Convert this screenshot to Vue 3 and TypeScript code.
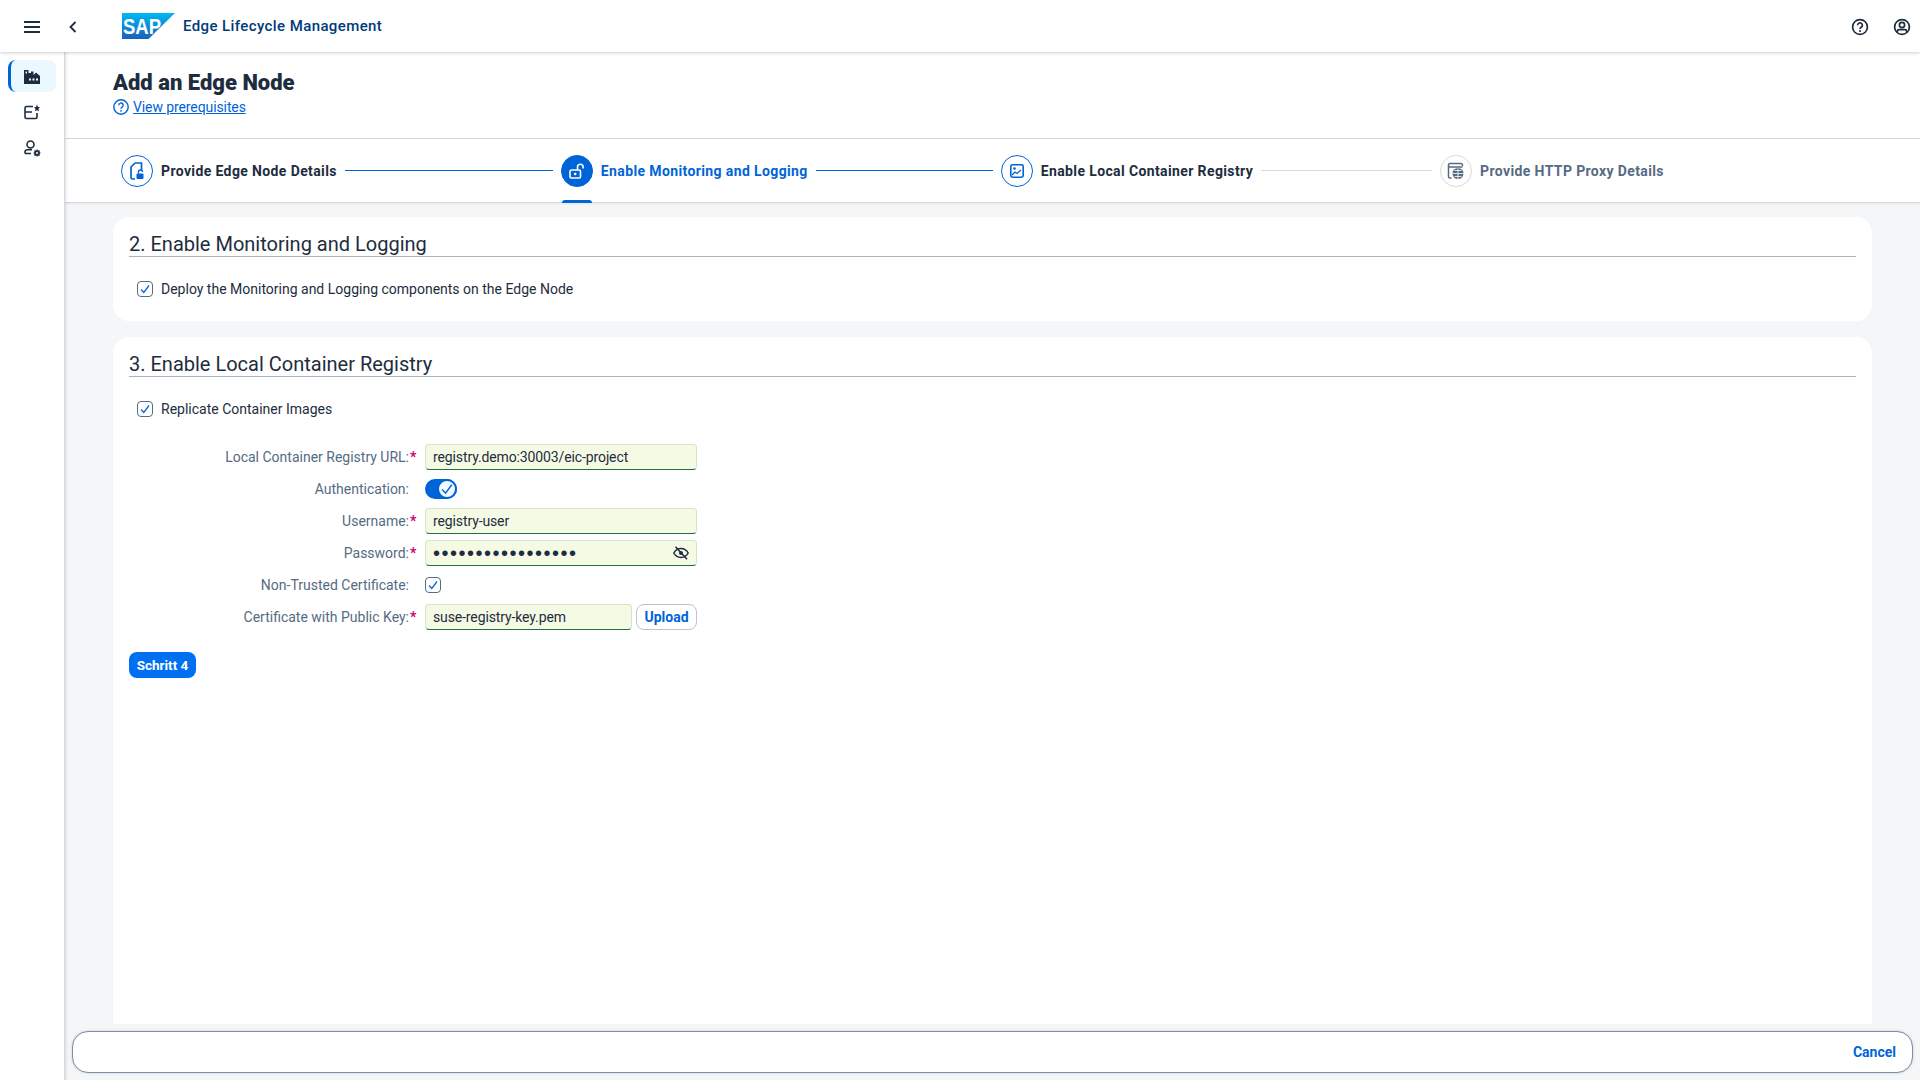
<script setup lang="ts">
interface Step {
  title: string
  state: 'done' | 'active' | 'next' | 'off'
  lineWidth: number
}

const steps: Step[] = [
  { title: 'Provide Edge Node Details', state: 'done', lineWidth: 208 },
  { title: 'Enable Monitoring and Logging', state: 'active', lineWidth: 177 },
  { title: 'Enable Local Container Registry', state: 'next', lineWidth: 171 },
  { title: 'Provide HTTP Proxy Details', state: 'off', lineWidth: 0 }
]
</script>

<template>
  <div class="app">
    <header class="shell">
      <svg class="burger" width="16" height="12" viewBox="0 0 16 12">
        <path d="M0 1h16M0 6h16M0 11h16" stroke="#1d2d3e" stroke-width="2" />
      </svg>
      <svg class="back" width="8" height="12" viewBox="0 0 8 12">
        <path d="M6.500 1L1.500 6l5 5" fill="none" stroke="#1d2d3e" stroke-width="1.800" />
      </svg>
      <svg class="logo" width="53" height="26" viewBox="0 0 53 26">
        <defs>
          <linearGradient id="sapBlue" x1="0" y1="0" x2="0" y2="1">
            <stop offset="0" stop-color="#00b8f1" />
            <stop offset="0.5" stop-color="#0a8ddb" />
            <stop offset="1" stop-color="#1e5fbb" />
          </linearGradient>
        </defs>
        <polygon points="0,0 53,0 26.500,26 0,26" fill="url(#sapBlue)" />
        <text x="1" y="21" class="logo-text" textLength="38" lengthAdjust="spacingAndGlyphs">SAP</text>
      </svg>
      <span class="app-title">Edge Lifecycle Management</span>
      <span class="shell-spacer"></span>
      <svg class="shell-icon" width="18" height="18" viewBox="0 0 18 18">
        <circle cx="9" cy="9" r="7.400" fill="none" stroke="#1d2d3e" stroke-width="1.700" />
        <path d="M6.600 7.200a2.400 2.400 0 1 1 3.600 2.100c-.8.500-1.200.9-1.200 1.700" fill="none" stroke="#1d2d3e" stroke-width="1.700" />
        <circle cx="9" cy="13" r="1.100" fill="#1d2d3e" />
      </svg>
      <svg class="shell-icon last" width="18" height="18" viewBox="0 0 18 18">
        <circle cx="9" cy="9" r="7.400" fill="none" stroke="#1d2d3e" stroke-width="1.700" />
        <circle cx="9" cy="7" r="2.600" fill="none" stroke="#1d2d3e" stroke-width="1.700" />
        <path d="M4.300 14v-.6c0-1 .8-1.800 1.800-1.800h5.800c1 0 1.800.8 1.800 1.800v.6" fill="none" stroke="#1d2d3e" stroke-width="1.700" />
      </svg>
    </header>

    <div class="body">
      <nav class="side">
        <a class="side-item selected">
          <svg class="factory" width="16" height="14" viewBox="0 0 16 14">
            <path d="M0 0h4.500v3h2.500v-1.500h2.500v3.500l2.500-2.500 4 3.500v8H0z" fill="#1d2d3e" />
            <path d="M5 8.500h2v2H5zM8.500 8.500h2v2h-2zM12 8.500h2v2h-2zM1.500 1.500h1.500v2H1.500z" fill="#ebf8ff" />
          </svg>
        </a>
        <a class="side-item">
          <svg width="16" height="16" viewBox="0 0 16 16">
            <path d="M9 2.500H2.500A1.500 1.500 0 0 0 1 4v9a1.500 1.500 0 0 0 1.500 1.500h9A1.500 1.500 0 0 0 13 13V9M1 8h7" fill="none" stroke="#1d2d3e" stroke-width="1.600" />
            <polygon points="13,0.500 14,3 16,3.300 14.500,5 15,7.300 13,6.200 11,7.300 11.500,5 10,3.300 12,3" fill="#1d2d3e" />
          </svg>
        </a>
        <a class="side-item">
          <svg width="17" height="17" viewBox="0 0 17 17">
            <circle cx="6.500" cy="4.500" r="3.500" fill="none" stroke="#1d2d3e" stroke-width="1.600" />
            <path d="M1 13.500v-1.500c0-1.500 1-2.200 2.500-2.200H8M1 13.500h6" fill="none" stroke="#1d2d3e" stroke-width="1.600" />
            <circle cx="13" cy="13" r="2" fill="none" stroke="#1d2d3e" stroke-width="1.700" />
            <path d="M13 9.500v7M9.500 13h7M10.500 10.500l5 5M15.500 10.500l-5 5" stroke="#1d2d3e" stroke-width="1.200" />
            <circle cx="13" cy="13" r="1" fill="#fff" />
          </svg>
        </a>
      </nav>

      <main class="page">
        <section class="page-head">
          <h1 class="page-title">Add an Edge Node</h1>
          <div class="prereq">
            <svg width="16" height="16" viewBox="0 0 16 16">
              <circle cx="8" cy="8" r="7.200" fill="none" stroke="#0064d9" stroke-width="1.400" />
              <path d="M5.800 6.300a2.200 2.200 0 1 1 3.300 1.900c-.7.400-1.100.8-1.100 1.500" fill="none" stroke="#0064d9" stroke-width="1.400" />
              <circle cx="8" cy="11.800" r=".9" fill="#0064d9" />
            </svg>
            <a class="link">View prerequisites</a>
          </div>
        </section>

        <div class="steps">
          <template v-for="(step, i) in steps" :key="step.title">
            <div class="step" :class="step.state">
              <span class="bubble">
                <svg v-if="i === 0" width="16" height="18" viewBox="0 0 16 18">
                  <path d="M6 1h6.500v7M6 1L2 5v10.500A1.500 1.500 0 0 0 3.500 17H6" fill="none" stroke="#0064d9" stroke-width="1.700" />
                  <rect x="7.500" y="11.500" width="7" height="5.500" rx="1" fill="#0064d9" />
                  <path d="M9.500 11.500v-1.500a2 2 0 0 1 4 0" fill="none" stroke="#0064d9" stroke-width="1.400" />
                </svg>
                <svg v-else-if="i === 1" width="16" height="16" viewBox="0 0 16 16">
                  <rect x="1" y="7" width="10.500" height="8" rx="1.500" fill="none" stroke="#fff" stroke-width="1.600" />
                  <circle cx="6.200" cy="11" r="1.300" fill="#fff" />
                  <path d="M8.500 7V4a2.800 2.800 0 0 1 5.600 0v1.500" fill="none" stroke="#fff" stroke-width="1.600" />
                </svg>
                <svg v-else-if="i === 2" width="14" height="14" viewBox="0 0 14 14">
                  <rect x=".8" y=".8" width="12.400" height="12.400" rx="1.600" fill="none" stroke="#0064d9" stroke-width="1.600" />
                  <circle cx="4.500" cy="4.500" r="1.300" fill="#0064d9" />
                  <path d="M2 11l3-3 2 1.500L11 6" fill="none" stroke="#0064d9" stroke-width="1.300" />
                </svg>
                <svg v-else width="18" height="18" viewBox="0 0 18 18">
                  <path d="M4.500 16H3a1.500 1.500 0 0 1-1.500-1.500V3A1.500 1.500 0 0 1 3 1.500h11A1.500 1.500 0 0 1 15.500 3v1M1.500 5h14" fill="none" stroke="#556b82" stroke-width="1.500" />
                  <circle cx="11" cy="11.500" r="5.500" fill="#556b82" />
                  <path d="M5.500 11.500h11M11 6v11M7.500 8.500h7M7.500 14.500h7" stroke="#fff" stroke-width=".8" />
                </svg>
              </span>
              <span class="step-title">{{ step.title }}</span>
              <span v-if="step.state === 'active'" class="step-mark"></span>
            </div>
            <span
              v-if="step.lineWidth"
              class="step-line"
              :class="{ muted: step.state === 'next' }"
              :style="{ width: step.lineWidth + 'px' }"
            ></span>
          </template>
        </div>

        <div class="content">
          <section class="card">
            <h2 class="card-title">2. Enable Monitoring and Logging</h2>
            <label class="check-row">
              <span class="check">
                <svg width="10" height="10" viewBox="0 0 10 10"><path d="M1 5.500L3.800 8.500 9 1.500" fill="none" stroke="#0064d9" stroke-width="1.300" /></svg>
              </span>
              Deploy the Monitoring and Logging components on the Edge Node
            </label>
          </section>

          <section class="card grow">
            <h2 class="card-title">3. Enable Local Container Registry</h2>
            <label class="check-row">
              <span class="check">
                <svg width="10" height="10" viewBox="0 0 10 10"><path d="M1 5.500L3.800 8.500 9 1.500" fill="none" stroke="#0064d9" stroke-width="1.300" /></svg>
              </span>
              Replicate Container Images
            </label>

            <div class="form">
              <div class="row">
                <label class="lbl">Local Container Registry URL:<i>*</i></label>
                <input class="field" value="registry.demo:30003/eic-project" readonly />
              </div>
              <div class="row">
                <label class="lbl">Authentication:<i class="blank"></i></label>
                <span class="toggle">
                  <span class="knob">
                    <svg width="12" height="12" viewBox="0 0 10 10"><path d="M1 5.500L3.800 8.500 9 1.500" fill="none" stroke="#0064d9" stroke-width="1.200" /></svg>
                  </span>
                </span>
              </div>
              <div class="row">
                <label class="lbl">Username:<i>*</i></label>
                <input class="field" value="registry-user" readonly />
              </div>
              <div class="row">
                <label class="lbl">Password:<i>*</i></label>
                <div class="pw">
                  <input class="field secret" type="password" value="abcdefghijklmnopq" readonly />
                  <svg class="eye" width="16" height="14" viewBox="0 0 16 14">
                    <path d="M.8 7C2.500 4 5 2.500 8 2.500S13.500 4 15.200 7C13.500 10 11 11.500 8 11.500S2.500 10 .8 7z" fill="none" stroke="#1d2d3e" stroke-width="1.500" />
                    <circle cx="8" cy="7" r="2" fill="#1d2d3e" />
                    <path d="M2.500 .8l11.500 12.400" stroke="#1d2d3e" stroke-width="1.500" />
                  </svg>
                </div>
              </div>
              <div class="row">
                <label class="lbl">Non-Trusted Certificate:<i class="blank"></i></label>
                <span class="check">
                  <svg width="10" height="10" viewBox="0 0 10 10"><path d="M1 5.500L3.800 8.500 9 1.500" fill="none" stroke="#0064d9" stroke-width="1.300" /></svg>
                </span>
              </div>
              <div class="row">
                <label class="lbl">Certificate with Public Key:<i>*</i></label>
                <div class="upload">
                  <input class="field" value="suse-registry-key.pem" readonly />
                  <button class="btn-ghost">Upload</button>
                </div>
              </div>
            </div>

            <button class="btn-primary">Schritt 4</button>
          </section>
        </div>

        <footer class="foot">
          <a class="cancel">Cancel</a>
        </footer>
      </main>
    </div>
  </div>
</template>

<style>
html,
body {
  margin: 0;
  background: #f5f6f7;
}
</style>

<style scoped>
.app {
  height: 100vh;
  display: flex;
  flex-direction: column;
  overflow: hidden;
  font-family: Roboto, 'Liberation Sans', sans-serif;
  font-size: 14px;
  color: #1d2d3e;
}

.shell {
  position: relative;
  z-index: 3;
  flex: none;
  box-sizing: border-box;
  height: 52px;
  display: flex;
  align-items: center;
  padding: 2px 0 0 24px;
  background: #fff;
  box-shadow: 0 1px 3px rgba(29, 45, 62, 0.22);
}
.burger {
  margin-right: 29px;
}
.back {
  margin-right: 45px;
}
.logo {
  margin: -2px 8px 0 0;
}
.logo-text {
  font-family: 'Liberation Sans', sans-serif;
  font-weight: 700;
  font-size: 22px;
  fill: #fff;
}
.app-title {
  margin-top: -2px;
  font-size: 15px;
  font-weight: 500;
  letter-spacing: 0.400px;
  color: #003b7a;
}
.shell-spacer {
  flex: 1;
}
.shell-icon {
  margin-right: 24px;
}
.shell-icon.last {
  margin-right: 9px;
}

.body {
  flex: 1;
  min-height: 0;
  display: flex;
}

.side {
  position: relative;
  z-index: 2;
  flex: none;
  width: 64px;
  border-right: 1px solid #d5d9dd;
  box-shadow: 1px 0 3px rgba(29, 45, 62, 0.14);
  background: #fff;
  padding-top: 8px;
  display: flex;
  flex-direction: column;
  align-items: flex-start;
  gap: 4px;
}
.side-item {
  box-sizing: border-box;
  margin-left: 8px;
  width: 48px;
  height: 32px;
  display: flex;
  align-items: center;
  justify-content: center;
  border-radius: 8px;
}
.side-item.selected {
  background: #ebf8ff;
  border-left: 3px solid #0064d9;
  padding-right: 3px;
}
.factory {
  margin-top: 2px;
}

.page {
  flex: 1;
  min-width: 0;
  display: flex;
  flex-direction: column;
}
.page-head {
  flex: none;
  height: 87px;
  box-sizing: border-box;
  padding: 16px 48px 0;
  background: #fff;
  border-bottom: 1px solid #d5d9dd;
}
.page-title {
  margin: 0;
  font-size: 22px;
  line-height: 30px;
  font-weight: 900;
}
.prereq {
  display: flex;
  align-items: center;
  gap: 4px;
  height: 18px;
}
.link {
  color: #0064d9;
  text-decoration: underline;
  font-size: 14px;
  letter-spacing: -0.100px;
}

.steps {
  flex: none;
  height: 64px;
  box-sizing: border-box;
  padding-left: 56px;
  display: flex;
  align-items: center;
  gap: 8px;
  background: #fff;
  border-bottom: 1px solid #d5d9dd;
  box-shadow: 0 1px 2px rgba(29, 45, 62, 0.08);
}
.step {
  position: relative;
  display: flex;
  align-items: center;
  gap: 8px;
}
.bubble {
  box-sizing: border-box;
  width: 32px;
  height: 32px;
  border-radius: 50%;
  border: 1px solid #0064d9;
  display: flex;
  align-items: center;
  justify-content: center;
}
.step-title {
  font-weight: 700;
  font-size: 14px;
  letter-spacing: 0.380px;
  white-space: nowrap;
}
.step.active .bubble {
  background: #0064d9;
}
.step.active .step-title {
  color: #0064d9;
}
.step.off .bubble {
  border-color: #d9d9d9;
}
.step.off .step-title {
  color: #556b82;
}
.step-mark {
  position: absolute;
  left: 1px;
  bottom: -16px;
  width: 30px;
  height: 3px;
  border-radius: 3px 3px 0 0;
  background: #0064d9;
}
.step-line {
  flex: none;
  height: 1px;
  background: #0064d9;
}
.step-line.muted {
  background: #d9d9d9;
}

.content {
  flex: 1;
  min-height: 0;
  box-sizing: border-box;
  padding: 14px 48px 0;
  display: flex;
  flex-direction: column;
  gap: 16px;
}
.card {
  box-sizing: border-box;
  padding: 16px 16px 24px;
  background: #fff;
  border-radius: 16px;
}
.card.grow {
  flex: 1;
  border-radius: 16px 16px 0 0;
}
.card-title {
  margin: 0;
  height: 23px;
  line-height: 23px;
  font-size: 20px;
  font-weight: 400;
  box-sizing: content-box;
  border-bottom: 1px solid #a9b4be;
}
.check-row {
  display: flex;
  align-items: center;
  gap: 8px;
  height: 16px;
  margin: 24px 0 0 8px;
  font-size: 14px;
}
.check {
  box-sizing: border-box;
  flex: none;
  width: 16px;
  height: 16px;
  border: 1px solid #556b82;
  border-radius: 4px;
  display: flex;
  align-items: center;
  justify-content: center;
}

.form {
  margin-top: 27px;
  display: flex;
  flex-direction: column;
  gap: 6px;
}
.row {
  display: flex;
  align-items: center;
  height: 26px;
}
.lbl {
  flex: none;
  width: 296px;
  display: flex;
  justify-content: flex-end;
  font-size: 14px;
  color: #556b82;
}
.lbl i {
  flex: none;
  width: 16px;
  padding-left: 1px;
  box-sizing: border-box;
  font-style: normal;
  font-weight: 700;
  color: #d1006f;
}
.field {
  box-sizing: border-box;
  width: 272px;
  height: 26px;
  padding: 0 7px;
  font: inherit;
  font-size: 14px;
  letter-spacing: -0.120px;
  color: #1d2d3e;
  background: #f5fae5;
  border: 1px solid #d5e5c5;
  border-bottom: 1px solid #256f3a;
  border-radius: 4px;
  outline: none;
}
.field.secret {
  font-family: 'Liberation Sans', sans-serif;
  font-size: 20px;
  letter-spacing: 1.500px;
}
.pw {
  position: relative;
  display: flex;
}
.eye {
  position: absolute;
  right: 8px;
  top: 6px;
}
.toggle {
  width: 32px;
  height: 20px;
  display: flex;
  justify-content: flex-end;
  border-radius: 10px;
  background: #0064d9;
}
.knob {
  box-sizing: border-box;
  width: 20px;
  height: 20px;
  border: 2px solid #0064d9;
  border-radius: 50%;
  background: #f2f9ff;
  display: flex;
  align-items: center;
  justify-content: center;
}
.upload {
  display: flex;
  gap: 4px;
  width: 272px;
}
.upload .field {
  width: 207px;
}
.btn-ghost {
  flex: 1;
  height: 26px;
  padding: 0;
  font: inherit;
  font-size: 14px;
  font-weight: 700;
  color: #0064d9;
  background: #fff;
  border: 1px solid #bcc3ca;
  border-radius: 8px;
}
.btn-primary {
  display: block;
  margin-top: 22px;
  width: 67px;
  height: 26px;
  padding: 0;
  font: inherit;
  font-size: 13.500px;
  font-weight: 700;
  color: #fff;
  background: #0070f2;
  border: none;
  border-radius: 8px;
}

.foot {
  flex: none;
  box-sizing: border-box;
  height: 42px;
  margin: 7px;
  padding-right: 16px;
  display: flex;
  align-items: center;
  justify-content: flex-end;
  background: #fff;
  border: 1px solid #788fa6;
  border-radius: 16px;
  box-shadow: 0 0 3px rgba(29, 45, 62, 0.2);
}
.cancel {
  font-weight: 700;
  font-size: 14px;
  color: #0064d9;
}
</style>
